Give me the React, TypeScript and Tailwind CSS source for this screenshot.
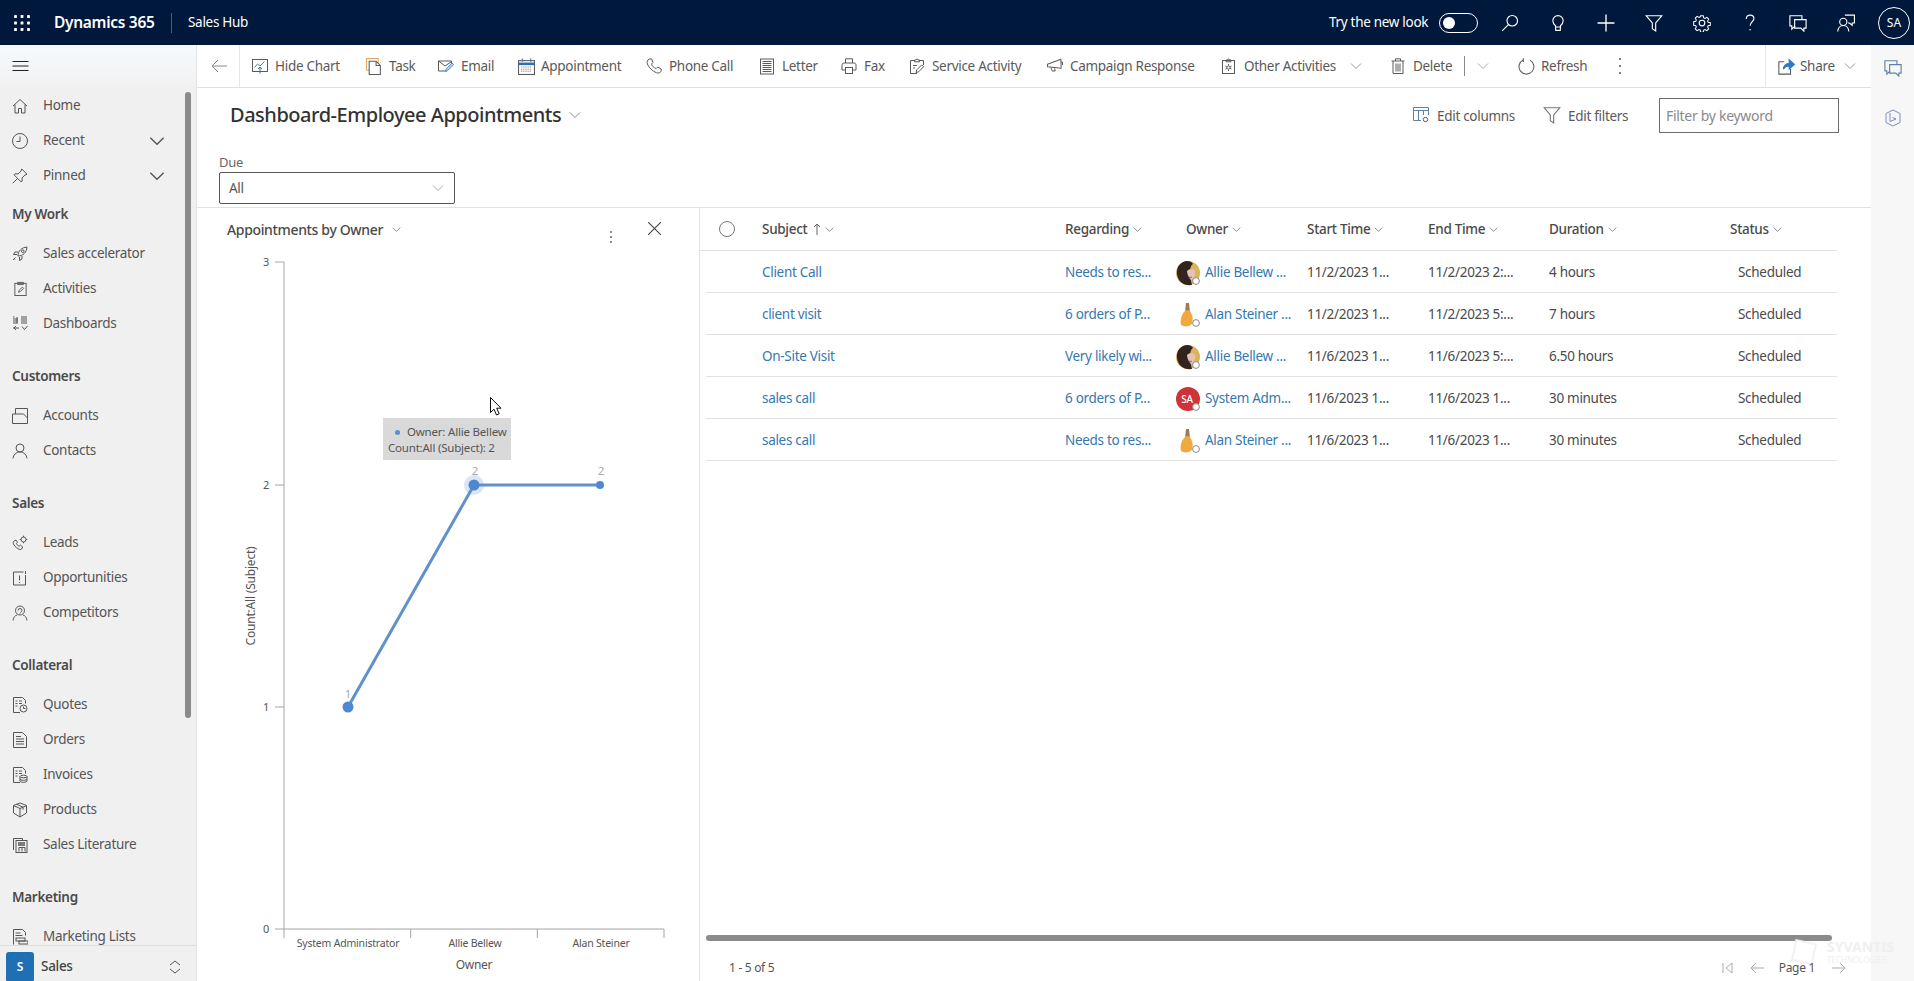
import React from "react";

type P = { children?: React.ReactNode; className?: string };
const I = ({ children, className = "w-4 h-4" }: P) => (
  <svg viewBox="0 0 16 16" fill="none" stroke="currentColor" strokeWidth="1" className={`${className} shrink-0`}>
    {children}
  </svg>
);
const Chev = ({ className = "w-3 h-3" }: P) => (
  <svg viewBox="0 0 12 12" fill="none" stroke="currentColor" strokeWidth="1" className={`${className} shrink-0`}>
    <path d="M1 3.5 6 8.5 11 3.5" />
  </svg>
);

const Waffle = () => (
  <svg viewBox="0 0 16 16" className="w-4 h-4 shrink-0" fill="#fff">
    {[1.5, 8, 14.5].flatMap((x) => [1.5, 8, 14.5].map((y) => <rect key={`${x}${y}`} x={x - 1.4} y={y - 1.4} width="2.8" height="2.8" rx="0.4" />))}
  </svg>
);

/* top bar */
const Search = () => <I className="w-[18px] h-[18px]"><circle cx="10" cy="6" r="4.7" /><path d="M6.6 9.4 1 15" /></I>;
const Bulb = () => <I className="w-[18px] h-[18px]"><path d="M5.8 11.6V10.4C4.4 9.3 3.4 7.9 3.4 6a4.6 4.6 0 0 1 9.2 0c0 1.9-1 3.3-2.4 4.4v1.2zM6 14.5h4l.2-2.9H5.8z" /></I>;
const PlusI = () => <I className="w-[18px] h-[18px]"><path d="M8 .5v15M.5 8h15" strokeWidth="1.2" /></I>;
const Funnel = () => <I className="w-[18px] h-[18px]"><path d="M1 1.5h14L9.5 8v7L6.5 13V8z" /></I>;
const Gear = () => (
  <I className="w-[18px] h-[18px]">
    <circle cx="8" cy="8" r="2.5" />
    <path d="M6.7 1h2.6l.4 2 1.3.6 1.8-1.1 1.8 1.8-1.1 1.8.6 1.3 2 .4v2.4l-2 .4-.6 1.3 1.1 1.8-1.8 1.8-1.8-1.1-1.3.6-.4 2H6.7l-.4-2-1.3-.6-1.8 1.1-1.8-1.8 1.1-1.8-.6-1.3-2-.4V6.8l2-.4.6-1.3-1.1-1.8 1.8-1.8L5 2.6l1.3-.6z" transform="translate(.7 .7) scale(.91)" />
  </I>
);
const Help = () => <I className="w-[18px] h-[18px]"><path d="M4.6 4.4C4.8 2.3 6.2 1 8.1 1c2 0 3.4 1.3 3.4 3.1 0 2.7-3.4 3-3.4 6.4" /><circle cx="8.1" cy="14" r=".7" fill="currentColor" stroke="none" /></I>;
const Chat = () => <I className="w-[18px] h-[18px]"><path d="M11.5 4.5v-3H.8v9h1.7v3l3-3" /><path d="M5 5h10.2v7.5h-2v2.7l-2.7-2.7H5z" /></I>;
const PersonChat = () => <I className="w-[18px] h-[18px]"><path d="M7 1h8.5v7h-2v2L11 8H9.8" /><circle cx="5.6" cy="7" r="3.2" /><path d="M.7 15.5c.2-3 2.2-5.3 4.9-5.3s4.7 2.3 4.9 5.3" /></I>;

/* command bar */
const HideChart = () => <I><rect x=".5" y="1.5" width="15" height="12" /><path d="M2.5 9.5 5.5 6l2.5 2 4.500-4.500" stroke="#3f9a8c" /><path d="M8 15.5V9M6 11l2-2 2 2" stroke="#2d6fb0" /></I>;
const TaskI = () => <I className="w-[17px] h-[17px]"><rect x=".5" y=".5" width="11" height="11" stroke="#e3a866" /><path d="M3 3h6.5l4 4v8.5H3z" fill="#fff" /><path d="M9.5 3v4h4" /></I>;
const EmailI = () => <I><path d="M.5 3h13v3M.5 3v10h8M.5 3l6.5 5 6-4" /><path d="M7.5 13.5l.6-2.5 6-6 1.6 1.6-6 6z" stroke="#4d8cc8" fill="#b9d3ec" /></I>;
const Cal = () => (
  <I className="w-[17px] h-[17px]">
    <rect x=".5" y="2.5" width="15" height="13" />
    <path d="M.5 5.5h15" stroke="#2d6fb0" strokeWidth="2.4" /><path d="M4 .5v3M12 .5v3" stroke="#2d6fb0" />
    <path d="M3 8.5h10M3 10.5h10M3 12.5h10" strokeDasharray="1 1" stroke="#777" />
  </I>
);
const Phone = () => <I><path d="M3 1 5.5.8 7 4.5 5.5 6C6 8 8 10 10.2 10.6l1.5-1.5L15.3 11l-.3 2.3c-.6 1.6-2.7 2.2-4.7 1.4C6.5 13.2 3 9.8 1.4 6 .7 4 1.4 2 3 1z" /></I>;
const LetterI = () => <I className="w-[16px] h-[17px]"><rect x="1.5" y=".5" width="13" height="15" /><path d="M3.5 3h9M3.5 5h9M3.5 7h9M3.5 9h9M3.5 11h9M3.5 13h9" /></I>;
const Fax = () => <I><path d="M4.5 5V.8h7V5" /><path d="M4.5 12H1V7c0-1.2.8-2 2-2h10c1.2 0 2 .8 2 2v5h-3.5" /><rect x="4.5" y="9.5" width="7" height="6" /></I>;
const Svc = () => <I><path d="M5.5 2.5h-4v13H8M10.5 2.5h4V7" /><path d="M5.5 3.8V2h1.5a1 1 0 0 1 2 0h1.5v1.8z" /><path d="M4 7.5h4M4 10h2" /><path d="M7 14.5l.7-2.6 5-5 1.9 1.9-5 5z" /></I>;
const Camp = () => <I><path d="M.5 6 14 1.5v9L.5 8.5z" transform="rotate(-2 8 6)" /><path d="M4 9.5l1.2 3.5h3l-.6-2.6" /><path d="M14 4h1.5v3" /></I>;
const Other = () => <I><rect x="1.5" y="2.5" width="12" height="13" /><path d="M5 3.8V2h1.5a1 1 0 0 1 2 0H10v1.8z" /><circle cx="7.5" cy="9.5" r="1.6" /><path d="M7.5 6v1.5M7.5 11.5V13M4.5 8l1.4.8M9.1 10.3l1.4.8M4.5 11.1l1.4-.8M9.1 8.8l1.4-.8" /></I>;
const Trash = () => <I><path d="M1.5 3h13M5.5 3V.8h5V3M3 3v12.5h10V3M6 5.5v8M8 5.5v8M10 5.5v8" /></I>;
const Refresh = () => <I className="w-[17px] h-[17px]"><path d="M5 1.8a7 7 0 1 0 6.3.2" /><path d="M5 .2v3.6" /></I>;
const ShareI = () => <I className="w-[17px] h-[17px]"><path d="M6 3.5H.8v11.7h11V10" /><path d="M5 10.5C5.3 7 7.8 5 10.5 5V1.5L15.5 6l-5 4.5V7.5c-2.3 0-4.2 1-5.5 3z" fill="#2f78c4" stroke="#2f78c4" /></I>;
const EditCols = () => <I><path d="M8 13.5H.5v-13h15V8M.5 3.5h15M5.5 3.5v10M10.5 3.5V8" stroke="#5c83a8" /><circle cx="12.5" cy="12.5" r="2.2" /></I>;

/* sidebar */
const HomeI = () => <I><path d="M1 8 8 1.5 15 8M3 6.5V15h3.5v-4.5h3V15H13V6.5" /></I>;
const Clock = () => <I><circle cx="8" cy="8" r="7.5" /><path d="M8 3.5V8.5H4.5" /></I>;
const PinI = () => <I><path d="M.7 15.3 5.5 10.5M9.8 1l5.2 5.2-2 .8-3 3 .2 3-1 1L2 6.8l1-1 3 .2 3-3z" /></I>;
const Rocket = () => <I><path d="M6 10C6 5 9.5 1.5 15 1c-.3 5.5-4 9-9 9zM6 6H3L1.5 8.5H5M10 10v3l-2.5 1.5V11" /><circle cx="10.8" cy="5.2" r="1.3" /><path d="M3.5 11.5 1 14M3 13.5l-.5.5" /></I>;
const Act = () => <I className="w-[15px] h-[17px]"><rect x="2" y="2.5" width="12" height="13" /><path d="M5 3.8V1.5h6v2.3zM6 12l.5-2 3.5-3.5 1.3 1.3L7.8 11.3z" /></I>;
const Dash = () => <I><path d="M1 1h1.5M1 3h5M1 5h5M1 7h5M5 1v6M9 1h6M9 3h6M9 5h6M9 7h6" /><path d="M1 12h6M4 10l-2 2 2 2M10 10.5l2.5 3 3-3.5" /></I>;
const Acc = () => <I className="w-[16px] h-[16px]"><path d="M.5 6h11l4 4v-9.5H3.5V6M.5 6v9.5h15V6" /></I>;
const Cont = () => <I><circle cx="8" cy="5" r="4" /><path d="M1 15.5c.3-3.5 3-6.5 7-6.5s6.7 3 7 6.5" /></I>;
const Leads = () => <I><path d="M2 6 4 5l1.5 2.3L4.5 8.5c.4 1.3 1.4 2.3 2.7 2.7l1.2-1L10.7 12l-1 2c-1 .8-2.5.5-4-.5C3.7 12.3 2 10.5 1.3 8.5 1 7.5 1.2 6.5 2 6z" /><circle cx="11.5" cy="4.5" r="2.5" /><path d="M11.5.7v1.3M11.5 7v1.3M7.7 4.5H9M14 4.5h1.3" /></I>;
const Opp = () => <I><path d="M11.5 2H1.5v13h12V5" /><path d="M7.5 5.5v5M7.5 12v1" /><path d="M13.5 1v3" /></I>;
const Comp = () => <I><circle cx="8" cy="5.5" r="4.5" /><path d="M1 15.5c.3-3 2-5 4-5.5M15 15.5c-.3-3-2-5-4-5.5M6 5.5a2 2 0 0 1 4 0c0 1.5-2 1.5-2 3" /></I>;
const Quo = () => <I><path d="M8 15.5H1.5V.5h9l3 3v3" /><path d="M3.5 4h2M3.5 6.5h2M3.5 9h2M7 4h3M7 6.5h3" /><circle cx="11.5" cy="11.5" r="3.5" /><path d="M11.5 9.5v2h2" /></I>;
const Ord = () => <I><path d="M1.5.5h9l4 4v11h-13z" /><path d="M4 4.5h5M4 7h8M4 9.5h8M4 12h8" /></I>;
const Inv = () => <I><path d="M8 15.5H1.5V.5h9l3 3v3" /><path d="M3.5 4h2M3.5 6.5h2M3.5 9h2M7 4h3M7 6.5h3" /><ellipse cx="11.5" cy="9.5" rx="3.5" ry="1.3" /><path d="M8 9.5v4.5c0 .7 1.5 1.3 3.5 1.3S15 14.7 15 14V9.5M8 12c0 .7 1.5 1.3 3.5 1.3S15 12.7 15 12" /></I>;
const Prod = () => <I><path d="M8 1 14.5 3.5V11L8 15 1.5 11V3.5zM1.5 3.5 8 6.5l6.5-3M8 6.5V15M4.5 2.2l6.5 3v2.5" /></I>;
const Lit = () => <I><path d="M1.5 13V1.5h9V3" /><rect x="4" y="3.5" width="11" height="12" /><path d="M6 6h7M6 8h7" strokeWidth="1.5" /><path d="M7 14.5V10.5M10 14.5v-4M13 14.5v-4M7 10.5h6" /></I>;
const Mkt = () => <I><path d="M1.5 15.5V.5h9l3 3v3" /><path d="M3.5 4h5M3.5 6.5h7" /><rect x="4" y="9" width="9" height="3" /><rect x="7" y="12" width="9" height="3" /></I>;

const NavItem = ({ icon, label, chev }: { icon: React.ReactNode; label: string; chev?: boolean }) => (
  <div className="flex items-center h-[35px] pl-[12px] text-[#555] shrink-0">
    <span className="w-[16px] h-[17px] flex items-center justify-center text-[#555]">{icon}</span>
    <span className="ml-[15px]">{label}</span>
    {chev && <Chev className="w-[16px] h-[16px] ml-auto mr-[31px] text-[#555]" />}
  </div>
);
const NavHead = ({ label, first }: { label: string; first?: boolean }) => (
  <div className={`h-[43px] flex items-center pl-[12px] font-semibold text-[#4a4a4a] shrink-0 ${first ? "" : "mt-[14px]"}`}>{label}</div>
);

const Sidebar = () => (
  <aside className="w-[197px] shrink-0 bg-[#f0f0f1] border-r border-[#e4e4e4] flex flex-col relative">
    <div className="h-[43px] pb-[2px] flex items-center pl-[12px] shrink-0 bg-gradient-to-b from-[#f6fafd] to-[#f1f1f2]">
      <svg viewBox="0 0 16 10" className="w-[17px] h-[10px]" stroke="#222" strokeWidth="1"><path d="M0 .5h16M0 5h16M0 9.5h16" /></svg>
    </div>
    <div className="flex-1 overflow-hidden flex flex-col">
      <NavItem icon={<HomeI />} label="Home" />
      <NavItem icon={<Clock />} label="Recent" chev />
      <NavItem icon={<PinI />} label="Pinned" chev />
      <NavHead label="My Work" first />
      <NavItem icon={<Rocket />} label="Sales accelerator" />
      <NavItem icon={<Act />} label="Activities" />
      <NavItem icon={<Dash />} label="Dashboards" />
      <NavHead label="Customers" />
      <NavItem icon={<Acc />} label="Accounts" />
      <NavItem icon={<Cont />} label="Contacts" />
      <NavHead label="Sales" />
      <NavItem icon={<Leads />} label="Leads" />
      <NavItem icon={<Opp />} label="Opportunities" />
      <NavItem icon={<Comp />} label="Competitors" />
      <NavHead label="Collateral" />
      <NavItem icon={<Quo />} label="Quotes" />
      <NavItem icon={<Ord />} label="Orders" />
      <NavItem icon={<Inv />} label="Invoices" />
      <NavItem icon={<Prod />} label="Products" />
      <NavItem icon={<Lit />} label="Sales Literature" />
      <NavHead label="Marketing" />
      <NavItem icon={<Mkt />} label="Marketing Lists" />
    </div>
    <div className="h-[36px] shrink-0 border-t border-[#dedede] flex items-start pt-[6px] pl-[6px] bg-[#f0f0f1]">
      <span className="w-[28px] h-[30px] bg-[#1f6fb5] rounded-[3px] text-white text-[12px] font-semibold flex items-center justify-center">S</span>
      <span className="ml-[7px] mt-[4px] font-medium text-[#444] w-[33px]">Sales</span>
      <svg viewBox="0 0 12 14" className="w-[12px] h-[14px] ml-[95px] mt-[8px]" fill="none" stroke="#555"><path d="M1 5 6 1l5 4M1 9l5 4 5-4" /></svg>
    </div>
    <div className="absolute left-[185px] top-[47px] w-[6px] h-[626px] rounded-[3px] bg-[#8b8b8b]" />
  </aside>
);

const Tool = ({ icon, label, className, children }: P & { icon: React.ReactNode; label: string }) => (
  <div className={`flex items-center shrink-0 ${className}`}>
    <span className="w-[16px] flex justify-center">{icon}</span>
    <span className="ml-[7px] mt-[1px] whitespace-nowrap">{label}</span>
    {children}
  </div>
);

const CommandBar = () => (
  <div className="h-[43px] shrink-0 border-b border-[#e0e0e0] flex items-stretch text-[#5a5a5a] relative bg-white">
    <div className="w-[43px] border-r border-[#e6e6e6] flex items-center pl-[14px]">
      <svg viewBox="0 0 16 14" className="w-[16px] h-[14px]" fill="none" stroke="#888"><path d="M16 7H1M7 1 1 7l6 6" /></svg>
    </div>
    <div className="flex items-center pl-[12px] flex-1">
      <Tool className="w-[114px]" icon={<HideChart />} label="Hide Chart" />
      <Tool className="w-[72px]" icon={<TaskI />} label="Task" />
      <Tool className="w-[80px]" icon={<EmailI />} label="Email" />
      <Tool className="w-[128px]" icon={<Cal />} label="Appointment" />
      <Tool className="w-[113px]" icon={<Phone />} label="Phone Call" />
      <Tool className="w-[82px]" icon={<LetterI />} label="Letter" />
      <Tool className="w-[68px]" icon={<Fax />} label="Fax" />
      <Tool className="w-[138px]" icon={<Svc />} label="Service Activity" />
      <Tool className="w-[174px]" icon={<Camp />} label="Campaign Response" />
      <Tool className="w-[169px]" icon={<Other />} label="Other Activities">
        <Chev className="w-[12px] h-[12px] ml-[14px] text-[#999]" />
      </Tool>
      <Tool className="w-[128px]" icon={<Trash />} label="Delete">
        <span className="w-px h-[20px] bg-[#888] ml-[12px]" />
        <Chev className="w-[12px] h-[12px] ml-[12px] text-[#aaa]" />
      </Tool>
      <Tool className="w-[100px]" icon={<Refresh />} label="Refresh" />
      <svg viewBox="0 0 4 18" className="w-[4px] h-[18px]" fill="#555"><circle cx="2" cy="2" r="1" /><circle cx="2" cy="9" r="1" /><circle cx="2" cy="16" r="1" /></svg>
    </div>
    <div className="w-[106px] border-l border-[#e6e6e6] flex items-center pl-[12px]">
      <ShareI />
      <span className="ml-[5px]">Share</span>
      <Chev className="w-[12px] h-[12px] ml-[9px] text-[#999]" />
    </div>
  </div>
);

const Presence = () => <circle cx="20" cy="20" r="3.4" fill="#fff" stroke="#8a8a8a" strokeWidth="1" />;
const Allie = () => (
  <svg viewBox="0 0 24 24" className="w-[24px] h-[24px] shrink-0 overflow-visible">
    <circle cx="12" cy="12" r="12" fill="#d8b45a" />
    <path d="M1 13C0 5 6 0 11 0c3 0 5 1 6 3-2 1-3 4-3 8 0 5 1 9 2 13-8 1-14-3-15-11z" fill="#33231f" />
    <path d="M11 10c2-2 6-3 8 0 1 3-1 8-4 9-2-2-4-6-4-9z" fill="#e6c2b4" />
    <path d="M13 16c1 .8 2.500.6 3-.2" stroke="#9c4a4a" fill="none" />
    <Presence />
  </svg>
);
const Alan = () => (
  <svg viewBox="0 0 24 24" className="w-[24px] h-[24px] shrink-0 overflow-visible">
    <path d="M10 0h3l1 9h-5z" fill="#9b7a5e" />
    <path d="M9 8c3-2 5-1 6 2 2 3 2 7 1 11-3 3-8 3-11 1-1-5 0-10 4-14z" fill="#f0a93c" />
    <Presence />
  </svg>
);
const Sys = () => (
  <svg viewBox="0 0 24 24" className="w-[24px] h-[24px] shrink-0 overflow-visible">
    <circle cx="12" cy="12" r="12" fill="#cf3238" />
    <text x="11" y="15.5" textAnchor="middle" fontSize="10" fontWeight="500" fill="#fff" fontFamily="'Noto Sans',sans-serif">SA</text>
    <Presence />
  </svg>
);

const Th = ({ label, className = "" }: { label: string; className?: string }) => (
  <div className={`flex items-center font-medium text-[#4a4a4a] whitespace-nowrap ${className}`}>
    {label}
    <Chev className="w-[9px] h-[9px] ml-[4px] text-[#666]" />
  </div>
);

const rows = [
  { s: "Client Call", r: "Needs to res...", a: <Allie />, o: "Allie Bellew ...", st: "11/2/2023 1...", e: "11/2/2023 2:...", d: "4 hours" },
  { s: "client visit", r: "6 orders of P...", a: <Alan />, o: "Alan Steiner ...", st: "11/2/2023 1...", e: "11/2/2023 5:...", d: "7 hours" },
  { s: "On-Site Visit", r: "Very likely wi...", a: <Allie />, o: "Allie Bellew ...", st: "11/6/2023 1...", e: "11/6/2023 5:...", d: "6.50 hours" },
  { s: "sales call", r: "6 orders of P...", a: <Sys />, o: "System Adm...", st: "11/6/2023 1...", e: "11/6/2023 1...", d: "30 minutes" },
  { s: "sales call", r: "Needs to res...", a: <Alan />, o: "Alan Steiner ...", st: "11/6/2023 1...", e: "11/6/2023 1...", d: "30 minutes" },
];

const Chart = () => (
  <svg width="502" height="731" viewBox="0 0 502 731" className="block" fontFamily="'Noto Sans',sans-serif">
    <path d="M87 12V679H467M78 12H87M78 235H87M78 457H87M78 679H87M87 679V688M213.7 679V688M340.3 679V688M467 679V688" stroke="#a6a6a6" fill="none" />
    <g fontSize="11" fill="#555" textAnchor="end">
      <text x="72" y="16">3</text>
      <text x="72" y="239">2</text>
      <text x="72" y="461">1</text>
      <text x="72" y="683">0</text>
    </g>
    <g fontSize="10.5" fill="#555" textAnchor="middle" letterSpacing="-0.2">
      <text x="151" y="697">System Administrator</text>
      <text x="278" y="697">Allie Bellew</text>
      <text x="404" y="697">Alan Steiner</text>
    </g>
    <text x="277" y="719" fontSize="12" fill="#555" textAnchor="middle">Owner</text>
    <text transform="translate(58 346) rotate(-90)" fontSize="12" fill="#555" textAnchor="middle" letterSpacing="-0.2">Count:All (Subject)</text>
    <polyline points="151,457 277,235 403,235" fill="none" stroke="#6091cb" strokeWidth="3" />
    <circle cx="277" cy="235" r="10" fill="#5b8fcf" opacity="0.22" />
    <circle cx="277" cy="235" r="5.5" fill="#4f88d2" />
    <circle cx="403" cy="235" r="4" fill="#4f88d2" />
    <circle cx="151" cy="457" r="5.5" fill="#4f88d2" />
    <g fontSize="11.5" fill="#aaa" textAnchor="middle">
      <text x="151" y="448">1</text>
      <text x="278" y="225">2</text>
      <text x="404" y="225">2</text>
    </g>
  </svg>
);

export default function App() {
  return (
    <div className="h-screen w-full overflow-hidden flex flex-col bg-white text-[13.5px] tracking-[-0.3px] font-['Noto_Sans',sans-serif]">
      <header className="h-[45px] shrink-0 bg-[#00183c] flex items-center text-white">
        <div className="w-[54px] pl-[14px]"><Waffle /></div>
        <span className="text-[15.5px] font-semibold w-[117px] whitespace-nowrap">Dynamics 365</span>
        <span className="w-px h-[20px] bg-[#4a5a78]" />
        <span className="ml-[16px] whitespace-nowrap">Sales Hub</span>
        <div className="ml-auto flex items-center">
          <span className="whitespace-nowrap w-[110px]">Try the new look</span>
          <span className="w-[39px] h-[20px] rounded-full border border-white flex items-center pl-[3px]">
            <span className="w-[12px] h-[12px] rounded-full bg-white" />
          </span>
          <div className="ml-[23px] flex items-center gap-[30px]">
            <Search /><Bulb /><PlusI /><Funnel /><Gear /><Help /><Chat /><PersonChat />
          </div>
          <span className="ml-[23px] mr-[4px] w-[32px] h-[32px] rounded-full border border-white flex items-center justify-center text-[12px] tracking-normal">SA</span>
        </div>
      </header>
      <div className="flex-1 flex min-h-0">
        <Sidebar />
        <main className="flex-1 min-w-0 flex flex-col">
          <CommandBar />
          <div className="h-[120px] shrink-0 border-b border-[#e2e2e2] flex flex-col">
            <div className="h-[54px] flex items-center">
              <h1 className="ml-[33px] text-[20px] font-medium text-[#333] whitespace-nowrap tracking-[-0.47px]">Dashboard-Employee Appointments</h1>
              <Chev className="w-[12px] h-[12px] ml-[8px] text-[#888]" />
              <div className="ml-auto flex items-center text-[#5a5a5a] pr-[32px]">
                <EditCols />
                <span className="ml-[8px] w-[106px] mt-[2px]">Edit columns</span>
                <span className="text-[#777]"><Funnel /></span>
                <span className="ml-[7px] w-[91px] mt-[2px]">Edit filters</span>
                <div className="w-[180px] h-[35px] border border-[#6b6b6b] flex items-center pl-[6px] text-[#8a8a8a] text-[14px]">Filter by keyword</div>
              </div>
            </div>
            <div className="pl-[22px]">
              <div className="h-[20px] pt-[1px] mt-[10px] text-[13px] text-[#666] flex items-center">Due</div>
              <div className="w-[236px] h-[32px] border border-[#555] rounded-[2px] flex items-center pl-[9px] pr-[10px] text-[#555]">
                All
                <Chev className="w-[12px] h-[12px] ml-auto text-[#aaa]" />
              </div>
            </div>
          </div>
          <div className="flex-1 flex min-h-0">
            <section className="w-[503px] shrink-0 border-r border-[#e2e2e2] flex flex-col relative">
              <div className="h-[42px] shrink-0 flex items-center pl-[30px] text-[#4a4a4a]">
                <span className="font-medium text-[14px] whitespace-nowrap tracking-[-0.35px]">Appointments by Owner</span>
                <Chev className="w-[9px] h-[9px] ml-[9px] text-[#666]" />
                <svg viewBox="0 0 4 14" className="w-[4px] h-[14px] ml-[208px] mt-[16px]" fill="#666"><circle cx="2" cy="2" r="1" /><circle cx="2" cy="7" r="1" /><circle cx="2" cy="12" r="1" /></svg>
                <svg viewBox="0 0 12 12" className="w-[13px] h-[13px] ml-[35px] -mt-[2px]" stroke="#444" fill="none"><path d="M0 0 12 12M12 0 0 12" /></svg>
              </div>
              <Chart />
              <div className="absolute left-[186px] top-[210px] w-[128px] h-[42px] bg-[#d9d9d9] text-[11.5px] leading-[16px] text-[#555] pt-[6px] pl-[5px] whitespace-nowrap tracking-[-0.2px]">
                <div className="flex items-center pl-[7px]"><span className="w-[5px] h-[5px] rounded-full bg-[#5b8fcf] mr-[7px]" />Owner: Allie Bellew</div>
                <div>Count:All (Subject): 2</div>
              </div>
              <svg viewBox="0 0 12 19" className="absolute left-[293px] top-[189px] w-[12px] h-[19px]" fill="#fff" stroke="#111"><path d="M.5.5v15l3.5-3.3 2.5 5.8 2.7-1.2-2.5-5.6H11z" /></svg>
            </section>
            <section className="flex-1 min-w-0 flex flex-col text-[#4a4a4a]">
              <div className="grid grid-cols-[62px_303px_111px_131px_121px_121px_181px_107px] h-[43px] shrink-0 border-b border-[#e2e2e2] items-center mr-[34px]">
                <div className="pl-[19px]"><span className="block w-[16px] h-[16px] rounded-full border border-[#777]" /></div>
                <div className="flex items-center font-medium text-[#4a4a4a]">Subject
                  <svg viewBox="0 0 8 12" className="w-[8px] h-[12px] ml-[6px]" stroke="#666" fill="none"><path d="M4 12V1M1 4l3-3 3 3" /></svg>
                  <Chev className="w-[9px] h-[9px] ml-[4px] text-[#666]" />
                </div>
                <Th label="Regarding" />
                <Th label="Owner" className="pl-[10px]" />
                <Th label="Start Time" />
                <Th label="End Time" />
                <Th label="Duration" />
                <Th label="Status" />
              </div>
              <div className="pl-[6px] pr-[34px]">
                {rows.map((r, i) => (
                  <div key={i} className="grid grid-cols-[56px_303px_111px_131px_121px_121px_181px_107px] h-[42px] pt-[2px] border-b border-[#e2e2e2] items-center whitespace-nowrap">
                    <span />
                    <span className="text-[#3578b0]">{r.s}</span>
                    <span className="text-[#3578b0]">{r.r}</span>
                    <span className="flex items-center text-[#3578b0]">{r.a}<span className="ml-[5px]">{r.o}</span></span>
                    <span>{r.st}</span>
                    <span>{r.e}</span>
                    <span>{r.d}</span>
                    <span className="pl-[8px]">Scheduled</span>
                  </div>
                ))}
              </div>
              <div className="flex-1" />
              <div className="ml-[6px] mr-[39px] h-[6px] rounded-[3px] bg-[#8b8b8b] shrink-0" />
              <div className="h-[40px] shrink-0 flex items-center pt-[14px] pl-[29px] pr-[25px] text-[12px] text-[#555] relative">
                <span>1 - 5 of 5</span>
                <div className="ml-auto flex items-center text-[#aaa]">
                  <svg viewBox="0 0 12 12" className="w-[12px] h-[12px]" fill="none" stroke="currentColor"><path d="M1 1v10M10 1 4 6l6 5z" /></svg>
                  <svg viewBox="0 0 14 12" className="w-[14px] h-[12px] ml-[16px]" fill="none" stroke="currentColor"><path d="M14 6H1M6 1 1 6l5 5" /></svg>
                  <span className="ml-[15px] text-[#555] relative z-10">Page 1</span>
                  <svg viewBox="0 0 14 12" className="w-[14px] h-[12px] ml-[17px] relative z-10" fill="none" stroke="currentColor"><path d="M0 6h13M8 1l5 5-5 5" /></svg>
                </div>
              </div>
            </section>
          </div>
        </main>
        <aside className="w-[43px] shrink-0 bg-[#f7f7f7] flex flex-col items-center pt-[14px] gap-[32px] text-[#5f80a8]">
          <Chat />
          <svg viewBox="0 0 16 18" className="w-[16px] h-[18px]" fill="none" stroke="#7c8fbd"><path d="M8 1 15 4.5v9L8 17l-7-3.5v-9z" /><path d="M5 4v8.5l6-2.5-3.500-1.500" /></svg>
        </aside>
      </div>
      <div className="absolute left-[1793px] top-[940px] flex items-center gap-[12px] text-[#f0f0f0] pointer-events-none tracking-normal">
        <span className="block w-[22px] h-[22px] border-2 border-[#f2f2f2] rotate-12" />
        <div className="leading-none"><div className="font-bold text-[14px]">SYVANTIS</div><div className="text-[8px] mt-[2px]">TECHNOLOGIES</div></div>
      </div>
    </div>
  );
}
